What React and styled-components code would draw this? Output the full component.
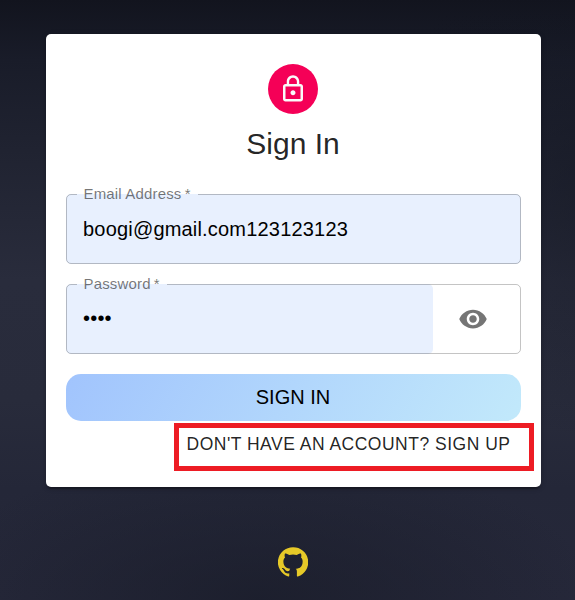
import React, { useState } from "react";
import styled, { createGlobalStyle } from "styled-components";

const GlobalStyle = createGlobalStyle`
  *, *::before, *::after { box-sizing: border-box; }
  body {
    margin: 0;
    font-family: "Liberation Sans", Arial, sans-serif;
    color: rgba(0, 0, 0, 0.87);
  }
`;

const Page = styled.div`
  height: 600px;
  display: flex;
  flex-direction: column;
  align-items: center;
  padding: 34px 22px 0 34px;
  overflow: hidden;
  background:
    radial-gradient(ellipse 340px 150px at 260px 600px, rgba(25, 28, 41, 0.75), transparent),
    radial-gradient(ellipse 220px 260px at 600px 180px, rgba(18, 21, 32, 0.5), transparent),
    linear-gradient(180deg, #12141e 0, #191c29 60px, #202331 150px, #292c3c 280px, #282b3b 400px, #242738 490px, #26283a 600px);
`;

const Card = styled.main`
  width: 495px;
  height: 453px;
  padding: 30px 20px 0;
  display: flex;
  flex-direction: column;
  align-items: center;
  background: #fff;
  border-radius: 5px;
  box-shadow: 0 4px 1px -2px rgba(0, 0, 0, 0.2), 0 2px 3px rgba(0, 0, 0, 0.14), 0 1px 6px rgba(0, 0, 0, 0.12);
`;

const Avatar = styled.div`
  display: grid;
  place-items: center;
  width: 50px;
  height: 50px;
  margin-right: 1px;
  border-radius: 50%;
  background: #f50057;
  color: #fafafa;
`;

const Title = styled.h1`
  margin: 10px 1px 30px 0;
  font-size: 30px;
  line-height: 40px;
  font-weight: 400;
`;

const Form = styled.form`
  width: 100%;
  display: flex;
  flex-direction: column;
  gap: 20px;
`;

const Field = styled.div`
  position: relative;
  display: flex;
  align-items: center;
  height: 70px;
`;

const Input = styled.input`
  flex: 1;
  min-width: 0;
  height: 70px;
  padding: 0 17px ${(p) => (p.type === "password" ? "1px" : "0")};
  border: 0;
  border-radius: 5px;
  outline: 0;
  background: #e8f0fe;
  color: #000;
  font: 20px "Liberation Sans", Arial, sans-serif;
  letter-spacing: 0.19px;
`;

const Outline = styled.fieldset`
  position: absolute;
  inset: -8px 0 0;
  margin: 0;
  padding: 0 10px;
  border: 1px solid rgba(0, 0, 0, 0.23);
  border-radius: 5px;
  pointer-events: none;
`;

const Legend = styled.legend`
  height: 17px;
  padding: 0 7px 0 6.5px;
  font-size: 15px;
  line-height: 15px;
  letter-spacing: 0.16px;
  color: rgba(0, 0, 0, 0.54);
  white-space: nowrap;
`;

const Adornment = styled.div`
  width: 88px;
  display: flex;
  padding-left: 25px;
`;

const IconButton = styled.button`
  display: flex;
  padding: 0;
  border: 0;
  background: none;
  color: rgba(0, 0, 0, 0.54);
`;

const Submit = styled.button`
  height: 47px;
  padding: 0 1px 1px 0;
  border: 0;
  border-radius: 15px;
  background: linear-gradient(120deg, #a1c4fd 0%, #c2e9fb 100%);
  color: #000;
  font: 20px "Liberation Sans", Arial, sans-serif;
`;

const Highlight = styled.div`
  align-self: flex-end;
  margin: 2px -13px 0 0;
  width: 360px;
  height: 48px;
  padding: 0 0 6px 7.5px;
  display: flex;
  align-items: center;
  border: 5px solid #ed1c24;
`;

const SwitchLink = styled.button`
  padding: 0;
  border: 0;
  background: none;
  color: rgba(0, 0, 0, 0.87);
  font: 17.5px "Liberation Sans", Arial, sans-serif;
  letter-spacing: 0.5px;
  white-space: nowrap;
`;

const Footer = styled.footer`
  margin-top: 60px;
  padding-right: 1px;
  display: flex;
  color: #e6c928;
`;

function LockIcon() {
  return (
    <svg width="30" height="30" viewBox="0 0 24 24" fill="currentColor">
      <path d="M12 17c1.1 0 2-.9 2-2s-.9-2-2-2-2 .9-2 2 .9 2 2 2zm6-9h-1V6c0-2.76-2.24-5-5-5S7 3.24 7 6v2H6c-1.1 0-2 .9-2 2v10c0 1.1.9 2 2 2h12c1.1 0 2-.9 2-2V10c0-1.1-.9-2-2-2zM8.9 6c0-1.71 1.39-3.1 3.1-3.1s3.1 1.39 3.1 3.1v2H8.9V6zM18 20H6V10h12v10z" />
    </svg>
  );
}

function EyeIcon() {
  return (
    <svg width="30" height="30" viewBox="0 0 24 24" fill="currentColor">
      <path d="M12 4.5C7 4.5 2.73 7.61 1 12c1.73 4.39 6 7.5 11 7.5s9.27-3.11 11-7.5c-1.73-4.39-6-7.5-11-7.5zM12 17c-2.76 0-5-2.24-5-5s2.24-5 5-5 5 2.24 5 5-2.24 5-5 5zm0-8c-1.66 0-3 1.34-3 3s1.34 3 3 3 3-1.34 3-3-1.34-3-3-3z" />
    </svg>
  );
}

function GitHubIcon() {
  return (
    <svg width="30" height="30" viewBox="1 1.1 22 22" fill="currentColor">
      <path d="M12 1.27a11 11 0 00-3.48 21.46c.55.09.73-.28.73-.55v-1.84c-3.03.64-3.67-1.46-3.67-1.46-.55-1.29-1.28-1.65-1.28-1.65-.92-.65.1-.65.1-.65 1.1 0 1.73 1.1 1.73 1.1.92 1.65 2.57 1.2 3.21.92a2 2 0 01.64-1.47c-2.47-.27-5.04-1.19-5.04-5.5 0-1.1.46-2.1 1.2-2.84a3.76 3.76 0 010-2.93s.91-.28 3.11 1.1c1.8-.49 3.7-.49 5.5 0 2.1-1.38 3.02-1.1 3.02-1.1a3.76 3.76 0 01.1 2.93c.83.74 1.2 1.74 1.2 2.94 0 4.21-2.57 5.13-5.04 5.4.45.37.82.92.82 2.02v3.03c0 .27.1.64.73.55A11 11 0 0012 1.27" />
    </svg>
  );
}

function TextField({ label, children }) {
  return (
    <Field>
      {children}
      <Outline>
        <Legend>{label}&thinsp;*</Legend>
      </Outline>
    </Field>
  );
}

export default function App() {
  const [visible, setVisible] = useState(false);
  return (
    <>
      <GlobalStyle />
      <Page>
        <Card>
          <Avatar><LockIcon /></Avatar>
          <Title>Sign In</Title>
          <Form onSubmit={(e) => e.preventDefault()}>
            <TextField label="Email Address">
              <Input type="text" aria-label="Email Address" defaultValue="boogi@gmail.com123123123" spellCheck={false} />
            </TextField>
            <TextField label="Password">
              <Input type={visible ? "text" : "password"} aria-label="Password" defaultValue="1234" />
              <Adornment>
                <IconButton type="button" aria-label="Toggle password visibility" onClick={() => setVisible(!visible)}>
                  <EyeIcon />
                </IconButton>
              </Adornment>
            </TextField>
            <Submit type="submit">SIGN IN</Submit>
          </Form>
          <Highlight>
            <SwitchLink type="button">DON'T HAVE AN ACCOUNT? SIGN UP</SwitchLink>
          </Highlight>
        </Card>
        <Footer><GitHubIcon /></Footer>
      </Page>
    </>
  );
}
